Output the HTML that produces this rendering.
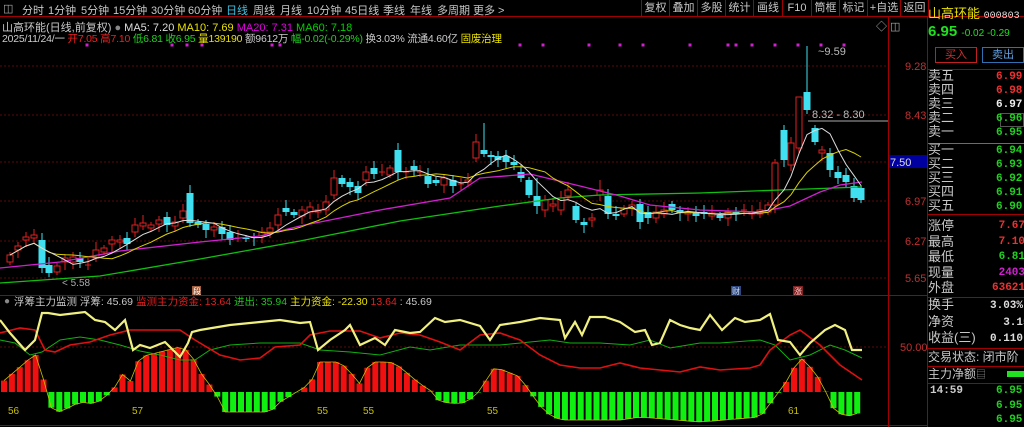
<!DOCTYPE html>
<html><head><meta charset="utf-8">
<style>
*{margin:0;padding:0;box-sizing:border-box}
body{width:1024px;height:427px;background:#000;overflow:hidden;position:relative;font-family:"Liberation Sans","Noto Sans CJK SC",sans-serif;font-size:11px;color:#c0c0c0}
.a{position:absolute;white-space:nowrap}
#tb{position:absolute;left:0;top:0;width:1024px;height:17px;border-bottom:1px solid #a00000}
#tb span{position:absolute;top:2px;font-size:11px;color:#c8c8c8}
.btn{position:absolute;top:0;height:17px;border-left:1px solid #a00000;color:#c8c8c8;font-size:11px;text-align:center;line-height:16px}
.rp{position:absolute;left:928px;width:96px;font-size:13px;white-space:nowrap;overflow:hidden}
.lbl{color:#c8c8c8}
.hl{position:absolute;left:928px;width:96px;height:1px;background:#a00000}
</style></head><body>
<div id="tb">
<span style="left:3px;color:#aaa">◫</span>
<span style="left:22px">分时</span><span style="left:48px">1分钟</span><span style="left:81px">5分钟</span><span style="left:113px">15分钟</span><span style="left:151px">30分钟</span><span style="left:188px">60分钟</span><span style="left:226px;color:#40c0e0">日线</span><span style="left:253px">周线</span><span style="left:280px">月线</span><span style="left:307px">10分钟</span><span style="left:345px">45日线</span><span style="left:383px">季线</span><span style="left:410px">年线</span><span style="left:437px">多周期</span><span style="left:473px">更多 &gt;</span>
<div class="btn" style="left:641px;width:28px">复权</div><div class="btn" style="left:669px;width:28px">叠加</div><div class="btn" style="left:697px;width:28px">多股</div><div class="btn" style="left:725px;width:28px">统计</div><div class="btn" style="left:753px;width:29px">画线</div><div class="btn" style="left:782px;width:29px">F10</div><div class="btn" style="left:811px;width:28px">筒框</div><div class="btn" style="left:839px;width:28px">标记</div><div class="btn" style="left:867px;width:33px">+自选</div><div class="btn" style="left:900px;width:28px">返回</div><div class="btn" style="left:928px;width:96px"></div>
</div>
<div class="a" style="left:2px;top:19px;font-size:11px"><span style="color:#c8c8c8">山高环能(日线,前复权)</span> <span style="color:#888">●</span> <span style="color:#ddd">MA5: 7.20</span> <span style="color:#e8e000">MA10: 7.69</span> <span style="color:#e000e0">MA20: 7.31</span> <span style="color:#00d000">MA60: 7.18</span></div>
<div class="a" style="left:2px;top:31px;font-size:10.5px;letter-spacing:-0.2px"><span style="color:#ccc">2025/11/24/一</span> <span style="color:#f02020">开7.05 高7.10</span> <span style="color:#20d020">低6.81 收6.95</span> <span style="color:#e8e000">量139190</span> <span style="color:#ccc">额9612万</span> <span style="color:#20d020">幅-0.02(-0.29%)</span> <span style="color:#ccc">换3.03% 流通4.60亿</span> <span style="color:#e8e000">固废治理</span></div>
<div class="a" style="left:876px;top:18px;color:#aaa;font-size:11px">◇ ◫</div>

<svg class="a" style="left:0;top:0" width="928" height="427" id="sv">
<g stroke="#5a0a0a" stroke-dasharray="2,2">
<line x1="0" y1="66" x2="888" y2="66"/><line x1="0" y1="115" x2="888" y2="115"/><line x1="0" y1="162" x2="888" y2="162"/><line x1="0" y1="201" x2="888" y2="201"/><line x1="0" y1="241" x2="888" y2="241"/><line x1="0" y1="278" x2="888" y2="278"/><line x1="0" y1="347" x2="888" y2="347"/>
</g>
<line x1="888.5" y1="17" x2="888.5" y2="427" stroke="#a00000"/>
<line x1="927.5" y1="17" x2="927.5" y2="427" stroke="#a00000"/>
<line x1="0" y1="295.5" x2="928" y2="295.5" stroke="#a00000"/>
<line x1="0" y1="425.5" x2="928" y2="425.5" stroke="#a00000"/>
<line x1="808" y1="121" x2="888" y2="121" stroke="#aaa"/>
<g font-size="11" fill="#c03030" font-family="Liberation Sans">
<text x="905" y="70">9.28</text><text x="905" y="119">8.43</text><text x="905" y="205">6.97</text><text x="905" y="245">6.27</text><text x="905" y="282">5.65</text><text x="900" y="351">50.00</text>
</g>
<rect x="889" y="155" width="38" height="13" fill="#0000a0"/>
<text x="890" y="166" font-size="11" fill="#ddd">7.50</text>
<text x="818" y="55" font-size="11" fill="#bbb">~9.59</text>
<text x="812" y="118" font-size="11" fill="#bbb">8.32 - 8.30</text>
<text x="62" y="286" font-size="10" fill="#aaa">&lt; 5.58</text>
<rect x="192" y="286" width="9" height="9" fill="#a06040"/>
<text x="193" y="294" font-size="8" fill="#fff">段</text>
<rect x="731" y="286" width="10" height="9" fill="#304880"/>
<text x="732" y="294" font-size="8" fill="#cde">财</text>
<rect x="793" y="286" width="10" height="9" fill="#802020"/>
<text x="794" y="294" font-size="8" fill="#fcc">涨</text>
<g id="cd"></g><g id="ind"></g>
<text x="4" y="304" font-size="10" fill="#888">●</text>
<text x="14" y="305" font-size="10.5"><tspan fill="#c8c8c8">浮筹主力监测  浮筹: 45.69</tspan><tspan fill="#e02020">  监测主力资金: 13.64</tspan><tspan fill="#20c020">  进出: 35.94</tspan><tspan fill="#e8e000">  主力资金: -22.30</tspan><tspan fill="#e02020">  13.64</tspan><tspan fill="#c8c8c8">  : 45.69</tspan></text>
<g font-size="10" fill="#c8c000"><text x="8" y="414">56</text><text x="132" y="414">57</text><text x="317" y="414">55</text><text x="363" y="414">55</text><text x="487" y="414">55</text><text x="788" y="414">61</text></g>
</svg>

<div class="rp" style="top:3px;color:#e8e000;font-size:13px">山高环能 <span style="font-size:10px;color:#ddd;font-family:'Liberation Mono'">000803</span></div>
<div class="rp" style="top:23px;color:#20e020;font-weight:bold;font-size:15px">6.95 <span style="font-size:10px;font-weight:normal">-0.02 -0.29</span></div>
<div class="a" style="left:935px;top:47px;width:42px;height:16px;border:1px solid #c02020;color:#d03030;text-align:center;line-height:14px">买入</div>
<div class="a" style="left:982px;top:47px;width:42px;height:16px;border:1px solid #3070b0;color:#60a0e0;text-align:center;line-height:14px">卖出</div>
<div class="hl" style="top:69px"></div>
<div class="a" style="left:1000px;top:113px;width:24px;height:14px;border:1px solid #555"></div>
<div class="hl" style="top:143px;background:#a06020"></div>
<div class="hl" style="top:297px"></div>
<div class="hl" style="top:348px"></div>
<div class="rp lbl" style="top:350px;font-size:12px;line-height:14px">交易状态: 闭市阶</div>
<div class="hl" style="top:366px"></div>
<div class="rp lbl" style="top:367px;font-size:12px;line-height:14px">主力净额<span style="color:#888;font-size:10px">▤</span></div>
<div class="a" style="left:1007px;top:371px;width:17px;height:6px;background:#20e020"></div>
<div class="hl" style="top:383px"></div>
<div class="a" style="left:930px;top:385px;color:#ccc;font-weight:bold;font-family:'Liberation Mono';font-size:11px">14:59</div>
<div class="a" style="left:996px;top:385px;color:#20d020;font-weight:bold;font-family:'Liberation Mono';font-size:11px">6.95</div>
<div class="a" style="left:996px;top:400px;color:#20d020;font-weight:bold;font-family:'Liberation Mono';font-size:11px">6.95</div>
<div class="a" style="left:996px;top:414px;color:#20d020;font-weight:bold;font-family:'Liberation Mono';font-size:11px">6.95</div>

<div class="rp lbl" style="top:69px;line-height:14px">卖五<br>卖四<br>卖三<br>卖二<br>卖一</div>
<div class="a" style="left:996px;top:70px;line-height:14px;font-weight:bold;font-family:'Liberation Mono';font-size:11px"><span style="color:#f03030">6.99</span><br><span style="color:#f03030">6.98</span><br><span style="color:#eee">6.97</span><br><span style="color:#20d020">6.96</span><br><span style="color:#20d020">6.95</span></div>
<div class="rp lbl" style="top:143px;line-height:14px">买一<br>买二<br>买三<br>买四<br>买五</div>
<div class="a" style="left:996px;top:144px;line-height:14px;font-weight:bold;font-family:'Liberation Mono';font-size:11px;color:#20d020">6.94<br>6.93<br>6.92<br>6.91<br>6.90</div>
<div class="hl" style="top:214px"></div>
<div class="rp lbl" style="top:218px;line-height:15.5px">涨停<br>最高<br>最低<br>现量<br>外盘</div>
<div class="a" style="left:992px;top:219px;line-height:15.5px;font-weight:bold;font-family:'Liberation Mono';font-size:11px"><span style="color:#f03030">&nbsp;7.67</span><br><span style="color:#f03030">&nbsp;7.10</span><br><span style="color:#20d020">&nbsp;6.81</span><br><span style="color:#d020d0">&nbsp;2403</span><br><span style="color:#f03030">63621</span></div>
<div class="rp lbl" style="top:297px;line-height:16.5px">换手<br>净资<br>收益(三)</div>
<div class="a" style="left:990px;top:298px;line-height:16.5px;font-weight:bold;font-family:'Liberation Mono';font-size:11px;color:#ddd">3.03%<br>&nbsp;&nbsp;3.15<br>0.110</div>

<script>
var NS="http://www.w3.org/2000/svg";
function el(t,a,p){var e=document.createElementNS(NS,t);for(var k in a)e.setAttribute(k,a[k]);p.appendChild(e);return e;}
var cd=document.getElementById('cd'),ind=document.getElementById('ind');
var C=[[10,262,255],[18,250,246],[26,240,237],[34,238,235],[42,240,268],[49,265,273],[57,272,266],[65,262,258],[73,262,257],[80,258,262],[88,265,265],[96,258,250],[104,252,248],[112,244,240],[120,242,240],[127,238,244],[135,232,225],[143,226,223],[151,228,225],[159,224,220],[167,217,225],[175,226,222],[183,218,211],[190,193,223],[198,222,225],[206,224,230],[214,230,227],[222,227,234],[230,232,240],[238,238,238],[246,238,239],[254,237,238],[262,236,232],[270,232,228],[278,225,215],[286,208,212],[294,212,215],[302,216,210],[310,212,207],[318,212,210],[326,210,202],[334,195,178],[342,178,184],[350,182,187],[358,186,193],[366,180,172],[374,168,174],[382,172,172],[390,175,168],[398,150,172],[406,172,172],[414,166,170],[420,172,172],[428,176,184],[436,180,183],[444,185,178],[453,180,186],[461,184,184],[468,182,180],[476,158,142],[484,150,154],[491,155,157],[498,156,160],[506,156,162],[514,162,165],[521,172,178],[529,180,195],[537,196,206],[545,210,200],[553,206,204],[561,210,198],[568,196,190],[576,206,220],[584,222,225],[592,220,218],[600,195,190],[608,196,214],[616,214,216],[624,214,208],[632,208,205],[640,204,222],[648,212,218],[656,218,212],[664,214,210],[672,204,210],[680,210,213],[688,214,212],[696,212,216],[704,212,214],[712,216,213],[720,215,218],[728,218,212],[736,212,214],[744,210,210],[752,214,212],[760,214,210],[768,212,205],[775,205,163],[784,130,160],[791,165,143],[799,148,97],[807,92,110],[815,128,142],[822,153,150],[830,153,170],[838,172,178],[846,175,182],[854,186,198],[861,188,200]];
var hi={807:46,776:150,484:123,398:143,537:178,600:180,799:97};
C.forEach(function(c,i){var x=c[0],o=c[1],cl=c[2],t=Math.min(o,cl),b=Math.max(o,cl);var up=cl<=o;var h=hi[x]||t-3-(i*7%6),l=b+3+(i*5%6);var col=up?'#e02020':'#40e0f0';
el('line',{x1:x,y1:h,x2:x,y2:l,stroke:col},cd);
if(b-t<1){el('line',{x1:x-3,y1:t,x2:x+3,y2:t,stroke:col},cd);}
else if(up)el('rect',{x:x-3,y:t,width:6,height:b-t,fill:'#000',stroke:col},cd);
else el('rect',{x:x-3.5,y:t,width:7,height:b-t,fill:col},cd);});
function ma(n){var p=[];for(var i=0;i<C.length;i++){var s=0,k=0;for(var j=Math.max(0,i-n+1);j<=i;j++){s+=C[j][2];k++;}p.push(C[i][0]+','+(s/k).toFixed(1));}return p.join(' ');}
el('polyline',{points:'0,283 100,276 200,259 300,241 400,221 500,206 560,198 600,195 700,193 780,190 862,187',fill:'none',stroke:'#10c010','stroke-width':1.3},cd);
el('polyline',{points:'0,268 60,262 120,251 200,242 260,236 300,226 380,210 450,198 480,178 530,174 580,186 620,196 650,205 700,210 760,212 790,206 820,192 840,185 862,182',fill:'none',stroke:'#d020d0','stroke-width':1.3},cd);
el('polyline',{points:ma(10),fill:'none',stroke:'#d8d000'},cd);
el('polyline',{points:ma(5),fill:'none',stroke:'#ddd'},cd);
[87,172,187,202,272,280,520,543,589,620,643,690,728,736,752,775,798,821,844].forEach(function(x){el('rect',{x:x-1.5,y:43.5,width:3,height:3,fill:'#d020d0'},cd);});
var K=[[0,8],[20,25],[35,38],[40,30],[45,5],[50,-15],[60,-20],[80,-10],[95,-12],[105,-5],[115,5],[120,20],[130,10],[140,35],[160,40],[180,45],[190,40],[200,20],[215,0],[225,-20],[270,-20],[280,-10],[300,2],[310,8],[320,30],[340,30],[350,20],[360,8],[370,30],[390,30],[400,25],[420,8],[430,2],[440,-10],[460,-12],[475,-5],[485,10],[495,25],[520,15],[530,0],[545,-20],[560,-28],[620,-28],[640,-25],[700,-30],[760,-25],[775,-5],[785,8],[800,35],[815,20],[825,2],[832,-15],[845,-25],[862,-20]];
function hv(x){for(var i=0;i<K.length-1;i++){if(x>=K[i][0]&&x<=K[i+1][0]){var f=(x-K[i][0])/(K[i+1][0]-K[i][0]);return K[i][1]+f*(K[i+1][1]-K[i][1]);}}return 0;}
var z=392,pp=[];
for(var x=4;x<=862;x+=7.9){var h=hv(x);pp.push(x.toFixed(1)+','+(z-h).toFixed(1));
if(h>0)el('rect',{x:x-3,y:z-h,width:6,height:h,fill:'#f01010'},ind);else el('rect',{x:x-3,y:z,width:6,height:-h,fill:'#10f010'},ind);}
el('polyline',{points:pp.join(' '),fill:'none',stroke:'#c8c000','stroke-width':0.8},ind);
el('polyline',{points:'0,340 15,343 30,355 42,352 60,340 80,337 100,340 120,345 140,351 160,355 180,360 195,360 210,350 230,345 260,343 300,343 320,350 350,352 380,355 410,347 430,350 460,345 500,345 550,340 570,343 600,343 630,345 650,340 670,348 700,343 720,343 760,340 775,345 790,360 810,355 830,345 845,350 862,358',fill:'none',stroke:'#10b010'},ind);
el('polyline',{points:'0,333 20,328 35,330 45,350 55,352 70,345 90,342 110,335 130,330 180,330 195,340 220,355 240,360 260,358 275,347 300,345 310,335 330,331 360,331 380,338 400,333 420,335 440,342 460,350 480,335 500,333 520,340 540,355 560,365 580,368 600,368 620,363 640,368 660,370 680,372 700,367 720,370 750,368 760,365 770,350 790,335 800,330 820,345 840,365 862,380',fill:'none',stroke:'#e01010','stroke-width':1.6},ind);
el('polyline',{points:'0,320 10,333 25,350 35,340 42,313 48,313 60,315 85,312 95,320 105,322 115,330 125,320 133,350 140,345 150,348 165,342 180,357 188,343 192,332 200,330 230,325 260,322 280,320 300,323 310,322 318,350 330,340 345,330 350,325 360,345 375,338 385,345 395,330 410,333 420,332 435,318 445,322 460,320 480,326 490,340 500,325 520,322 540,318 560,320 565,338 575,322 582,335 590,317 605,317 620,322 635,332 645,330 652,345 660,343 670,320 680,325 690,328 700,330 710,315 722,330 735,318 745,322 760,320 770,314 778,340 790,342 800,355 810,343 825,330 835,325 845,330 852,350 862,350',fill:'none',stroke:'#f0f080','stroke-width':2.2},ind);
</script>
</body></html>
